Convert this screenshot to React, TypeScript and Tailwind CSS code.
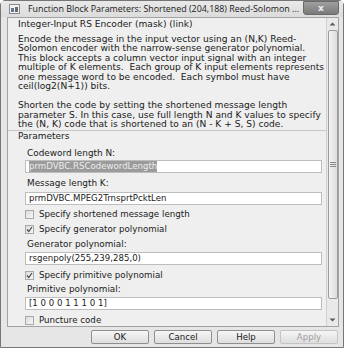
import React from 'react';

const font = "font-['DejaVu_Sans',sans-serif]";

const Check = ({ checked }: { checked?: boolean }) => (
  <span className="w-[9px] h-[9px] border border-[#a9a9a9] bg-gradient-to-br from-[#dcdcdc] to-[#f7f7f7] flex items-center justify-center">
    {checked && (
      <svg width="7" height="7" viewBox="0 0 7 7">
        <path d="M1 3.5 L2.8 5.5 L6 1" fill="none" stroke="#4a4a4a" strokeWidth="1.2" />
      </svg>
    )}
  </span>
);

const CheckRow = ({ label, checked, className }: { label: string; checked?: boolean; className: string }) => (
  <div className={`h-[12px] flex items-center gap-[5px] pl-[17px] ${className}`}>
    <Check checked={checked} />
    <span className="text-[8.7px] leading-[12px] text-[#1a1a1a]">{label}</span>
  </div>
);

const Field = ({ value, selected, className }: { value: string; selected?: boolean; className: string }) => (
  <div className={`ml-[17px] w-[297px] h-[13px] bg-white border border-[#bdbdbd] flex items-center pl-[3px] ${className}`}>
    <span className={`text-[8.6px] leading-[11px] ${selected ? 'bg-[#9b9b9b] text-[#ececec]' : 'text-[#1a1a1a]'}`}>{value}</span>
  </div>
);

const Label = ({ text, className }: { text: string; className: string }) => (
  <div className={`h-[12px] pl-[19px] text-[8.9px] leading-[12px] text-[#1a1a1a] ${className}`}>{text}</div>
);

const Button = ({ text, disabled }: { text: string; disabled?: boolean }) => (
  <button
    className={`w-[58px] h-[14px] rounded-[2px] border bg-gradient-to-b from-[#f6f6f6] to-[#dedede] text-[8.6px] leading-[12px] ${
      disabled ? 'border-[#c4c4c4] text-[#a0a0a0]' : 'border-[#8f8f8f] text-[#1a1a1a]'
    }`}
  >
    {text}
  </button>
);

export default function App() {
  return (
    <div className={`w-[347px] h-[351px] bg-white overflow-hidden ${font}`}>
      <div className="w-[344px] h-[348px] bg-[#e6e6e6] border border-[#767676] rounded-t-[5px] flex flex-col">
        {/* title bar */}
        <div className="h-[16px] flex items-center pl-[8px] pr-[4px] bg-gradient-to-b from-[#e9e9e9] to-[#dcdcdc]">
          <svg width="11" height="10" viewBox="0 0 11 10" className="mr-[8px]">
            <rect x="0.5" y="0.5" width="10" height="9" fill="#f2f2f2" stroke="#8a8a8a" />
            <rect x="2" y="4" width="3" height="4" fill="#5a7a9a" />
            <rect x="6" y="3" width="3" height="5" fill="#6a6a6a" />
          </svg>
          <span className="font-['Open_Sans',sans-serif] text-[8.9px] leading-[14px] text-[#1a1a1a] whitespace-nowrap flex-1 overflow-hidden">
            Function Block Parameters: Shortened (204,188) Reed-Solomon ...
          </span>
          <div className="w-[36px] h-[14px] -mt-[2px] shrink-0 rounded-b-[3px] border border-[#6a6a6a] bg-gradient-to-b from-[#a0a0a0] to-[#7a7a7a] flex items-center justify-center">
            <span className="text-[9px] leading-[10px] font-bold text-[#f0f0f0]">x</span>
          </div>
        </div>

        {/* scroll pane */}
        <div className="ml-[6px] mr-[4px] h-[310px] border border-[#a3a3a3] bg-[#efefef] flex overflow-hidden">
          <div className="flex-1 flex flex-col overflow-hidden">
            <div className="h-[113px] shrink-0 border-b border-[#c6c6c6] pt-[2px] pl-[10px] text-[9.1px] leading-[9.5px] text-[#1a1a1a] whitespace-nowrap">
              <div>Integer-Input RS Encoder (mask) (link)</div>
              <div className="mt-[5px]">
                <p>
                  Encode the message in the input vector using an (N,K) Reed-
                  <br />
                  Solomon encoder with the narrow-sense generator polynomial.
                  <br />
                  This block accepts a column vector input signal with an integer
                  <br />
                  multiple of K elements.&nbsp; Each group of K input elements represents
                  <br />
                  one message word to be encoded.&nbsp; Each symbol must have
                  <br />
                  ceil(log2(N+1)) bits.
                </p>
                <p className="mt-[9.5px]">
                  Shorten the code by setting the shortened message length
                  <br />
                  parameter S. In this case, use full length N and K values to specify
                  <br />
                  the (N, K) code that is shortened to an (N - K + S, S) code.
                </p>
              </div>
            </div>
            <div className="h-[11px] shrink-0 pl-[10px] text-[9px] leading-[11px] text-[#1a1a1a]">Parameters</div>
            <Label text="Codeword length N:" className="mt-[5px]" />
            <Field value="prmDVBC.RSCodewordLength" selected className="mt-[1px]" />
            <Label text="Message length K:" className="mt-[4px]" />
            <Field value="prmDVBC.MPEG2TrnsprtPcktLen" className="mt-[3px]" />
            <CheckRow label="Specify shortened message length" className="mt-[3px]" />
            <CheckRow label="Specify generator polynomial" checked className="mt-[3px]" />
            <Label text="Generator polynomial:" className="mt-[3px]" />
            <Field value="rsgenpoly(255,239,285,0)" className="mt-[2px]" />
            <CheckRow label="Specify primitive polynomial" checked className="mt-[4px]" />
            <Label text="Primitive polynomial:" className="mt-[2px]" />
            <Field value="[1 0 0 0 1 1 1 0 1]" className="mt-[2px]" />
            <CheckRow label="Puncture code" className="mt-[4px] shrink-0" />
          </div>

          {/* scrollbar */}
          <div className="w-[12px] border-l border-[#d0d0d0] bg-[#e9e9e9] flex flex-col items-center">
            <svg width="7" height="4" viewBox="0 0 7 4" className="mt-[4px]">
              <path d="M0.5 3.5 L3.5 0.5 L6.5 3.5 Z" fill="#5a5a5a" />
            </svg>
            <div className="mt-[4px] w-[10px] h-[269px] rounded-[2px] border border-[#9c9c9c] bg-gradient-to-r from-[#f4f4f4] to-[#dcdcdc] flex items-center justify-center">
              <svg width="6" height="5" viewBox="0 0 6 5">
                <path d="M0 0.5 H6 M0 2.5 H6 M0 4.5 H6" stroke="#8a8a8a" strokeWidth="1" />
              </svg>
            </div>
            <div className="flex-1" />
            <svg width="7" height="4" viewBox="0 0 7 4" className="mb-[4px]">
              <path d="M0.5 0.5 L3.5 3.5 L6.5 0.5 Z" fill="#5a5a5a" />
            </svg>
          </div>
        </div>

        {/* buttons */}
        <div className="mt-[3px] flex justify-end gap-[5px] pr-[5px]">
          <Button text="OK" />
          <Button text="Cancel" />
          <Button text="Help" />
          <Button text="Apply" disabled />
        </div>
      </div>
    </div>
  );
}
